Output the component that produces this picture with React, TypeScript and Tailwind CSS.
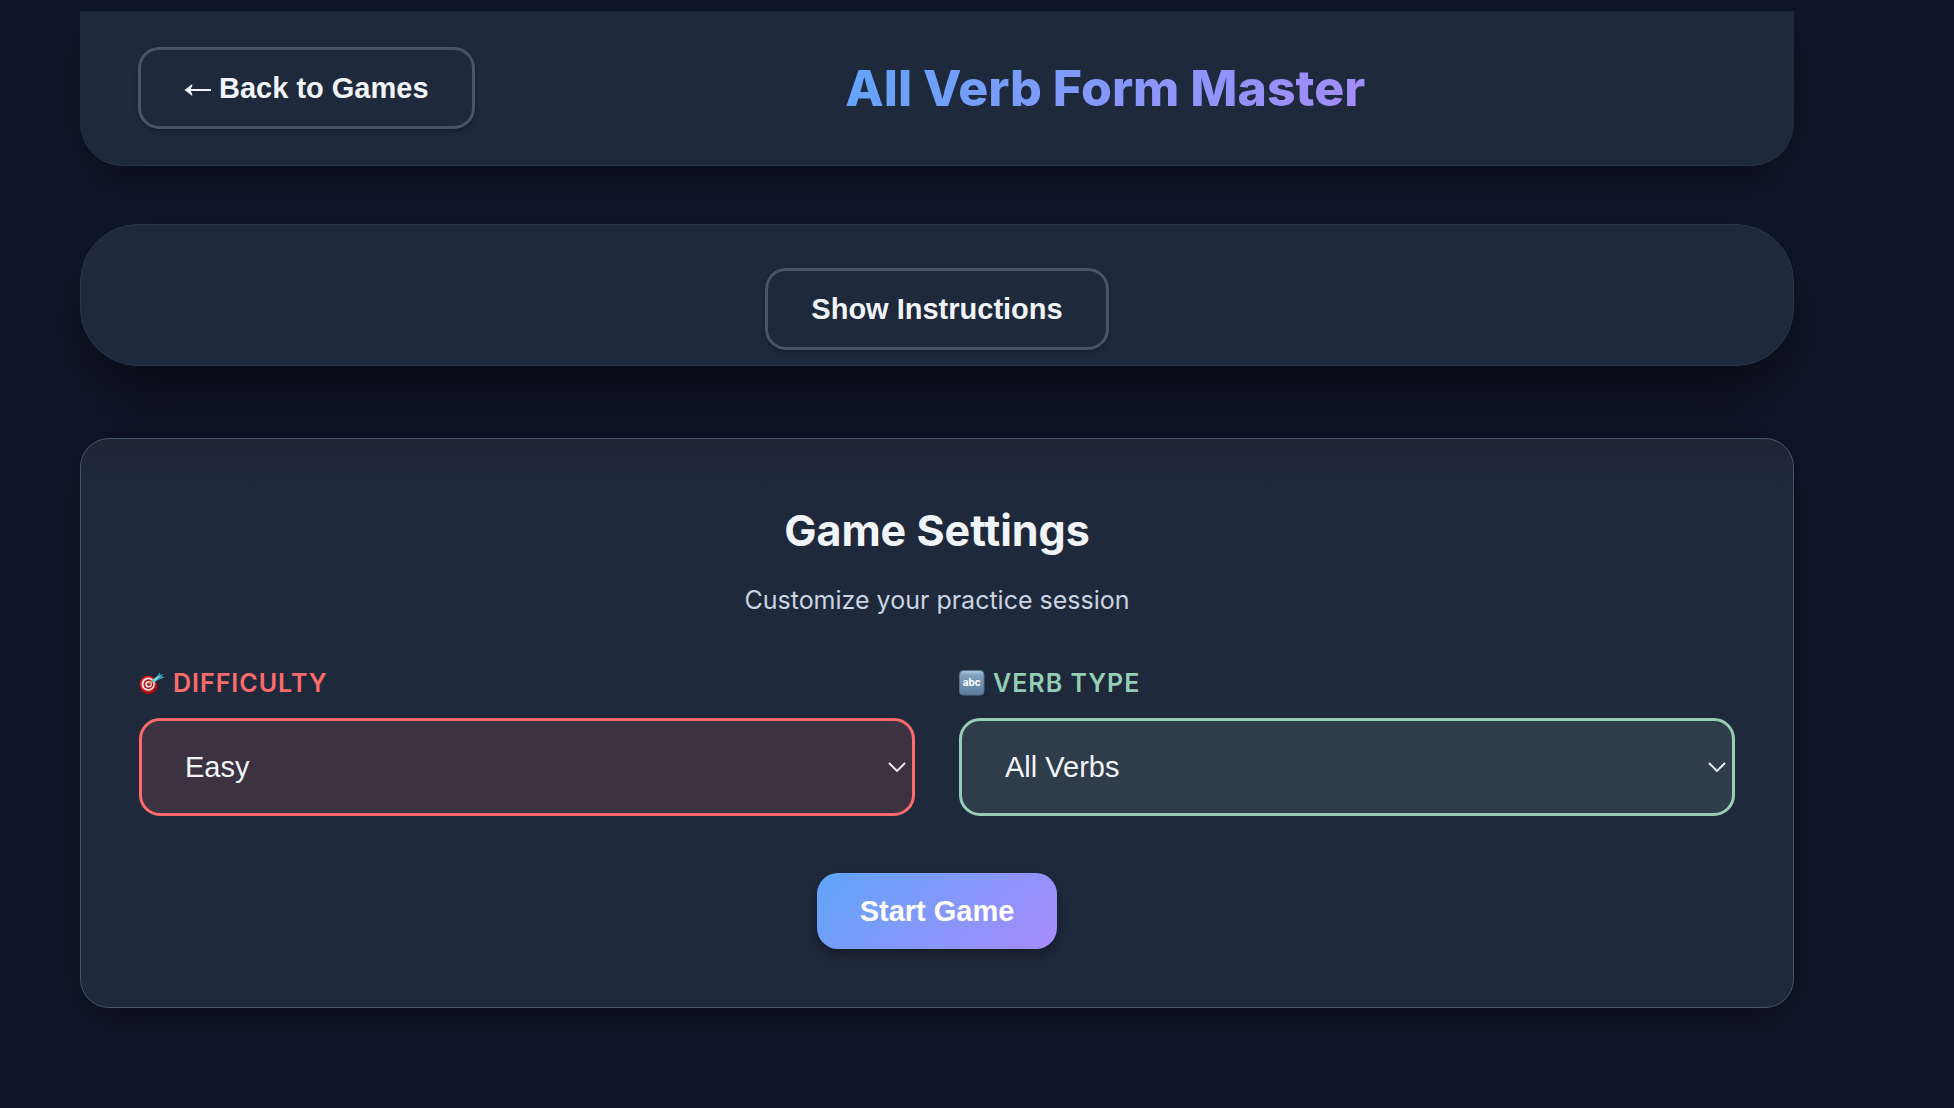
import { useState } from 'react';
import type { ReactNode } from 'react';

const difficulties = ['Easy', 'Medium', 'Hard'];
const verbTypes = ['All Verbs', 'Regular Verbs', 'Irregular Verbs'];

function ArrowLeft() {
  return (
    <svg viewBox="0 0 27 14" className="mt-1 h-[14px] w-[27px] shrink-0" fill="none" aria-hidden="true">
      <path d="M5 7H27" stroke="currentColor" strokeWidth="2" />
      <path d="M0.5 7L8 1.2L8.4 2.4L6.2 7L8.4 11.6L8 12.8Z" fill="currentColor" />
    </svg>
  );
}

function DartIcon() {
  return (
    <svg viewBox="0 0 26 26" className="h-[26px] w-[26px] shrink-0" fill="none" aria-hidden="true">
      <ellipse cx="9.6" cy="15.6" rx="9" ry="8.8" fill="#8f1013" />
      <circle cx="9" cy="14.2" r="8.4" fill="#d3191d" />
      <circle cx="9.2" cy="14.2" r="6.6" fill="#f4eeee" />
      <circle cx="9.4" cy="14.2" r="4.9" fill="#c2181c" />
      <circle cx="9.6" cy="14.2" r="3.3" fill="#f4eeee" />
      <circle cx="9.8" cy="14.2" r="1.8" fill="#c2181c" />
      <path d="M10.5 13.5L15.5 10.2" stroke="#c39a4a" strokeWidth="1.6" />
      <path d="M14 11.4L20.5 6.6" stroke="#4cc3cf" strokeWidth="3.4" />
      <path d="M18.2 7.2L20.4 2.2L21.4 5L24.2 3.6L22.8 6L25.6 7.4L20 9.4Z" fill="#3a9ba8" />
      <path d="M15 10.2L20.5 6.2" stroke="#8fe6ea" strokeWidth="1.2" />
    </svg>
  );
}

function AbcIcon() {
  return (
    <svg viewBox="0 0 26 26" className="h-[26px] w-[26px] shrink-0 normal-case" aria-hidden="true">
      <defs>
        <linearGradient id="abc-tile" x1="0" y1="0" x2="0" y2="1">
          <stop offset="0" stopColor="#b5cbe0" />
          <stop offset="0.2" stopColor="#7f9fbf" />
          <stop offset="1" stopColor="#5d7d99" />
        </linearGradient>
      </defs>
      <rect x="0.5" y="0.5" width="24.5" height="24.5" rx="4" fill="url(#abc-tile)" stroke="#55728d" />
      <text
        x="12.7"
        y="15.5"
        textAnchor="middle"
        fill="#ffffff"
        className="font-[Inter,sans-serif] text-[10px] font-bold tracking-normal"
      >
        abc
      </text>
    </svg>
  );
}

type SettingProps = {
  id: string;
  label: string;
  icon: ReactNode;
  options: string[];
  labelClass: string;
  selectClass: string;
};

function Setting({ id, label, icon, options, labelClass, selectClass }: SettingProps) {
  const [value, setValue] = useState(options[0]);

  return (
    <div className="flex flex-col gap-[15px]">
      <label
        htmlFor={id}
        className={`flex items-center gap-2 text-[25px] leading-10 font-semibold tracking-[1px] uppercase ${labelClass}`}
      >
        {icon}
        {label}
      </label>
      <div className="relative">
        <select
          id={id}
          value={value}
          onChange={(e) => setValue(e.target.value)}
          className={`block w-full appearance-none rounded-[21px] border-3 px-[43px] py-7 font-['Liberation_Sans',Arial,sans-serif] text-[29px] leading-9 text-[#f1f5f9] ${selectClass}`}
        >
          {options.map((option) => (
            <option key={option} className="bg-[#1e293b]">
              {option}
            </option>
          ))}
        </select>
        <svg
          viewBox="0 0 18 10"
          className="pointer-events-none absolute top-1/2 right-[9px] h-[10px] w-[18px] -translate-y-1/2"
          fill="none"
          aria-hidden="true"
        >
          <path d="M1 1L9 9L17 1" stroke="#f1f5f9" strokeWidth="1.8" />
        </svg>
      </div>
    </div>
  );
}

const outlineButton =
  "flex items-center gap-2 rounded-[21px] border-3 border-[#475569] bg-[#1e293b] px-[43px] py-5 font-['Liberation_Sans',Arial,sans-serif] text-[29px] leading-9 font-bold text-[#f1f5f9] shadow-[0_2px_4px_rgba(0,0,0,0.3)]";

export default function App() {
  const [showInstructions, setShowInstructions] = useState(false);

  return (
    <div className="min-h-screen bg-[#0f172a] pt-[11px] pr-40 pb-20 pl-20 font-[Inter,sans-serif] text-[#f1f5f9]">
      {/* Header */}
      <header className="flex items-center rounded-b-[43px] border-b border-[#293548] bg-[#1e293b] px-[58px] py-9 shadow-[0_12px_46px_rgba(0,0,0,0.4)]">
        <button type="button" className={outlineButton}>
          <ArrowLeft />
          Back to Games
        </button>
        <h1 className="flex-1 text-center text-[50px] leading-[64px] font-extrabold">
          <span className="bg-[linear-gradient(135deg,#60a5fa,#a78bfa)] bg-clip-text text-transparent">
            All Verb Form Master
          </span>
        </h1>
      </header>

      {/* Instructions */}
      <section className="mt-[58px] flex flex-col items-center rounded-[58px] border border-[#293548] bg-[#1e293b] px-[58px] pt-[43px] pb-[15px] shadow-[0_29px_72px_rgba(0,0,0,0.5)]">
        <button
          type="button"
          aria-expanded={showInstructions}
          onClick={() => setShowInstructions(!showInstructions)}
          className={outlineButton}
        >
          {showInstructions ? 'Hide Instructions' : 'Show Instructions'}
        </button>
        {showInstructions && (
          <p className="py-6 text-[25px] leading-10 text-[#cbd5e1]">
            Pick a difficulty and a verb type, then write the correct form of each verb.
          </p>
        )}
      </section>

      {/* Settings */}
      <section className="mt-[72px] flex flex-col rounded-[29px] border border-[#475569] bg-[linear-gradient(to_bottom,#1d2635,#1e293b_56px)] p-[58px] shadow-[0_14px_44px_rgba(0,0,0,0.4)]">
        <h2 className="text-center text-[43px] leading-[66px] font-bold">Game Settings</h2>
        <p className="mt-[17px] text-center text-[25px] leading-10 text-[#cbd5e1]">
          Customize your practice session
        </p>

        <div className="mt-[43px] grid grid-cols-2 gap-[44px]">
          <Setting
            id="difficulty"
            label="Difficulty"
            icon={<DartIcon />}
            options={difficulties}
            labelClass="text-[#ff6b6b]"
            selectClass="border-[#ff6b6b] bg-[#3c3241]"
          />
          <Setting
            id="verb-type"
            label="Verb Type"
            icon={<AbcIcon />}
            options={verbTypes}
            labelClass="text-[#96ceb4]"
            selectClass="border-[#96ceb4] bg-[#2f3d4a]"
          />
        </div>

        <button
          type="button"
          className="mt-[57px] self-center rounded-[21px] bg-[linear-gradient(135deg,#60a5fa,#a78bfa)] px-[43px] py-5 font-['Liberation_Sans',Arial,sans-serif] text-[29px] leading-9 font-bold text-white shadow-[0_6px_12px_rgba(0,0,0,0.3)]"
        >
          Start Game
        </button>
      </section>
    </div>
  );
}
